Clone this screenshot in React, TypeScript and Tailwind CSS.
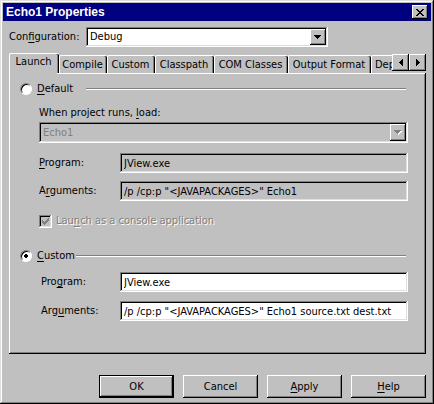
import { useState } from "react";
import type { ReactNode } from "react";
import { clsx } from "clsx";

const raised =
  "bg-[#c0c0c0] shadow-[inset_-1px_-1px_0_#000,inset_1px_1px_0_#fff,inset_-2px_-2px_0_#808080]";
const sunken =
  "shadow-[inset_-1px_-1px_0_#fff,inset_1px_1px_0_#808080,inset_-2px_-2px_0_#dfdfdf,inset_2px_2px_0_#000]";

const tabs = [
  { name: "Launch", width: "w-[50px]" },
  { name: "Compile", width: "w-[48px]" },
  { name: "Custom", width: "w-[48px]" },
  { name: "Classpath", width: "w-[59px]" },
  { name: "COM Classes", width: "w-[74px]" },
  { name: "Output Format", width: "w-[83px]" },
  { name: "Dependencies", width: "w-[80px]" },
];

function Key({ children }: { children: ReactNode }) {
  return <u className="underline underline-offset-2 [text-decoration-skip-ink:none]">{children}</u>;
}

function Arrow({ direction, disabled }: { direction: "down" | "left" | "right"; disabled?: boolean }) {
  if (direction === "down") {
    return (
      <svg width="8" height="5" viewBox="0 0 8 5" shapeRendering="crispEdges" aria-hidden="true">
        {disabled && <path d="M1 1h7v1H7v1H6v1H5v1H4V4H3V3H2V2H1z" fill="#fff" />}
        <path d="M0 0h7v1H6v1H5v1H4v1H3V3H2V2H1V1H0z" fill={disabled ? "#808080" : "#000"} />
      </svg>
    );
  }
  return (
    <svg width="4" height="7" viewBox="0 0 4 7" shapeRendering="crispEdges" aria-hidden="true">
      <path d={direction === "left" ? "M4 0v7H3V6H2V5H1V4H0V3h1V2h1V1h1V0z" : "M0 0v7h1V6h1V5h1V4h1V3H3V2H2V1H1V0z"} />
    </svg>
  );
}

function Combo({ id, value, disabled }: { id: string; value: string; disabled?: boolean }) {
  return (
    <div className={clsx("relative w-full p-0.5", sunken, disabled ? "h-[21px]" : "h-5 bg-white")}>
      <select
        id={id}
        disabled={disabled}
        className={clsx(
          "block h-full w-full appearance-none bg-transparent pl-0.5 leading-4 opacity-100 outline-none",
          disabled ? "text-[#808080]" : "text-black",
        )}
      >
        <option>{value}</option>
      </select>
      <span className={clsx("pointer-events-none absolute inset-y-0.5 right-0.5 flex w-4 items-center justify-center", raised)}>
        <Arrow direction="down" disabled={disabled} />
      </span>
    </div>
  );
}

function Field({ id, label, value, custom }: { id: string; label: ReactNode; value: string; custom?: boolean }) {
  return (
    <div className={clsx("flex items-center", custom ? "pl-8" : "pl-[30px]")}>
      <label htmlFor={id} className={clsx("shrink-0", custom ? "w-[79px]" : "w-[81px]")}>
        {label}
      </label>
      <input
        id={id}
        type="text"
        defaultValue={value}
        readOnly={!custom}
        className={clsx("h-5 min-w-0 flex-1 px-1 outline-none", sunken, custom ? "bg-white" : "bg-transparent")}
      />
    </div>
  );
}

function Mode({ id, label, checked, onChange, gap }: { id: string; label: ReactNode; checked: boolean; onChange: () => void; gap: string }) {
  return (
    <div className="flex h-3.5 items-center pl-[11px]">
      <input
        id={id}
        type="radio"
        name="mode"
        checked={checked}
        onChange={onChange}
        className="size-3 shrink-0 appearance-none rounded-full border border-t-[#808080] border-r-white border-b-white border-l-[#808080] bg-white shadow-[inset_1px_1px_0_#000] outline-none checked:bg-[radial-gradient(circle,#000_0_2px,#fff_2px)]"
      />
      <label htmlFor={id} className={clsx("shrink-0 pl-[5px]", gap)}>
        {label}
      </label>
      <div className="mr-0.5 h-0.5 flex-1 border-t border-b border-t-[#808080] border-b-white" />
    </div>
  );
}

function PushButton({ children, primary }: { children: ReactNode; primary?: boolean }) {
  return (
    <button
      type="button"
      className={clsx(
        "h-[23px] w-[75px]",
        primary
          ? "bg-[#c0c0c0] shadow-[inset_0_0_0_1px_#000,inset_-2px_-2px_0_#000,inset_2px_2px_0_#fff,inset_-3px_-3px_0_#808080]"
          : raised,
      )}
    >
      {children}
    </button>
  );
}

export default function App() {
  const [active, setActive] = useState("Launch");
  const [mode, setMode] = useState("custom");

  return (
    <div className="min-h-screen w-full bg-[#c0c0c0] p-[3px] pb-1.5 font-['DejaVu_Sans_Condensed','DejaVu_Sans',sans-serif] text-[11px] leading-[14px] text-black shadow-[inset_-1px_-1px_0_#000,inset_1px_1px_0_#dfdfdf,inset_-2px_-2px_0_#808080,inset_2px_2px_0_#fff]">
      <header className="flex h-[18px] items-center justify-between bg-[#000080] pr-[3px] pl-[3px]">
        <h1 className="font-['Liberation_Sans',Arial,sans-serif] text-xs font-bold text-white">Echo1 Properties</h1>
        <button type="button" aria-label="Close" className={clsx("flex h-3.5 w-4 items-center justify-center", raised)}>
          <svg width="8" height="7" viewBox="0 0 8 7" shapeRendering="crispEdges" aria-hidden="true">
            <path d="M0 0h2v1h1v1h2V1h1V0h2v1H7v1H6v1H5v1h1v1h1v1h1v1H6V6H5V5H3v1H2v1H0V6h1V5h1V4h1V3H2V2H1V1H0z" />
          </svg>
        </button>
      </header>

      <main className="pr-[5px] pl-1.5">
        <div className="mt-1.5 flex items-center pr-[98px]">
          <label htmlFor="configuration" className="w-[77px] shrink-0">
            Con<Key>f</Key>iguration:
          </label>
          <Combo id="configuration" value="Debug" />
        </div>

        <div className="relative mt-1.5 pr-0.5">
          <div role="tablist" className="flex h-5 items-end overflow-hidden">
            {tabs.map(({ name, width }) => (
              <button
                key={name}
                type="button"
                role="tab"
                aria-selected={active === name}
                onClick={() => setActive(name)}
                className={clsx(
                  "shrink-0 rounded-t-xs border-t border-l border-white bg-[#c0c0c0] pr-0.5 whitespace-nowrap shadow-[inset_-1px_0_0_#000,inset_-2px_0_0_#808080]",
                  width,
                  active === name ? "h-5 pb-1" : "h-[18px]",
                  name === "Dependencies" && "pl-[3px] text-left",
                )}
              >
                {name}
              </button>
            ))}
          </div>
          <div className="absolute top-px right-0 flex">
            <button type="button" aria-label="Scroll tabs left" className={clsx("flex size-[17px] items-center justify-center", raised)}>
              <Arrow direction="left" />
            </button>
            <button type="button" aria-label="Scroll tabs right" className={clsx("flex size-[17px] items-center justify-center", raised)}>
              <Arrow direction="right" />
            </button>
          </div>
        </div>

        <section className={clsx("relative pt-[9px] pr-[18px] pb-[33px]", raised)}>
          {active === "Launch" && <div className="absolute top-0 left-px h-px w-[47px] bg-[#c0c0c0]" />}
          <Mode
            id="mode-default"
            label={<><Key>D</Key>efault</>}
            checked={mode === "default"}
            onChange={() => setMode("default")}
            gap="w-[54px]"
          />
          <div className="mt-2.5 pl-[30px]">
            <label htmlFor="load" className="mb-0.5 block">
              When project runs, <Key>l</Key>oad:
            </label>
            <Combo id="load" value="Echo1" disabled />
          </div>
          <div className="mt-2.5 flex flex-col gap-2">
            <Field id="default-program" label={<><Key>P</Key>rogram:</>} value="JView.exe" />
            <Field id="default-arguments" label={<>A<Key>r</Key>guments:</>} value={'/p /cp:p "<JAVAPACKAGES>" Echo1'} />
          </div>
          <div className="mt-[13px] flex h-3.5 items-center pl-[30px]">
            <span className="relative flex">
              <input id="console" type="checkbox" defaultChecked disabled className={clsx("size-[13px] appearance-none", sunken)} />
              <svg className="pointer-events-none absolute top-[3px] left-[3px]" width="7" height="7" viewBox="0 0 7 7" shapeRendering="crispEdges" aria-hidden="true">
                <path d="M0 2h1v1h1v1h1V3h1V2h1V1h1V0h1v3H6v1H5v1H4v1H3v1H2V6H1V5H0z" fill="#808080" />
              </svg>
            </span>
            <label htmlFor="console" className="pl-1 text-[#808080] [text-shadow:1px_1px_0_#fff]">
              Lau<Key>n</Key>ch as a console application
            </label>
          </div>

          <div className="mt-[21px]">
            <Mode
              id="mode-custom"
              label={<><Key>C</Key>ustom</>}
              checked={mode === "custom"}
              onChange={() => setMode("custom")}
              gap="pr-px"
            />
          </div>
          <div className="mt-[9px] flex flex-col gap-[9px]">
            <Field custom id="custom-program" label={<>Pro<Key>g</Key>ram:</>} value="JView.exe" />
            <Field custom id="custom-arguments" label={<>Arg<Key>u</Key>ments:</>} value={'/p /cp:p "<JAVAPACKAGES>" Echo1 source.txt dest.txt'} />
          </div>
        </section>

        <footer className="mt-[21px] flex justify-end gap-[9px]">
          <PushButton primary>OK</PushButton>
          <PushButton>Cancel</PushButton>
          <PushButton><Key>A</Key>pply</PushButton>
          <PushButton><Key>H</Key>elp</PushButton>
        </footer>
      </main>
    </div>
  );
}
